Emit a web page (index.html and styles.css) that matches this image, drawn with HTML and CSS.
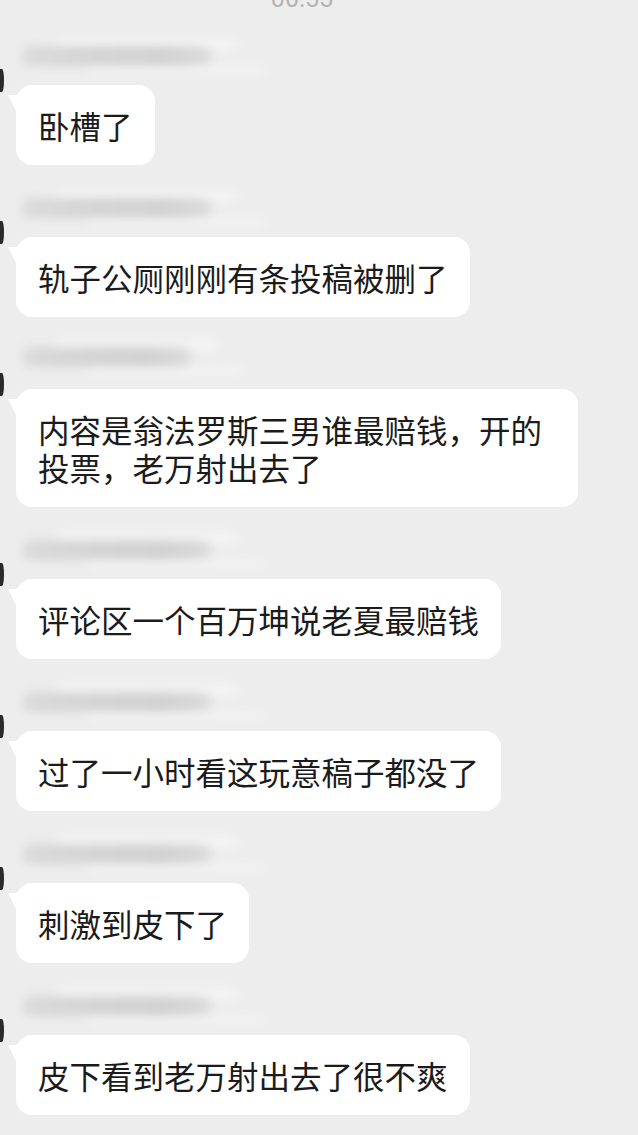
FILE: index.html
```html
<!DOCTYPE html>
<html lang="zh-CN">
<head>
<meta charset="utf-8">
<title>聊天记录</title>
<link rel="stylesheet" href="styles.css">
</head>
<body>
<div class="chat">
  <div class="time">00:55</div>

  <div class="msg">
    <div class="head"><div class="name-blur"></div></div>
    <span class="avatar"></span>
    <div class="bubble">卧槽了</div>
  </div>

  <div class="msg">
    <div class="head"><div class="name-blur"></div></div>
    <span class="avatar"></span>
    <div class="bubble">轨子公厕刚刚有条投稿被删了</div>
  </div>

  <div class="msg">
    <div class="head"><div class="name-blur name-short"></div></div>
    <span class="avatar"></span>
    <div class="bubble">内容是翁法罗斯三男谁最赔钱，开的投票，老万射出去了</div>
  </div>

  <div class="msg">
    <div class="head"><div class="name-blur"></div></div>
    <span class="avatar"></span>
    <div class="bubble">评论区一个百万坤说老夏最赔钱</div>
  </div>

  <div class="msg">
    <div class="head"><div class="name-blur"></div></div>
    <span class="avatar"></span>
    <div class="bubble">过了一小时看这玩意稿子都没了</div>
  </div>

  <div class="msg">
    <div class="head"><div class="name-blur"></div></div>
    <span class="avatar"></span>
    <div class="bubble">刺激到皮下了</div>
  </div>

  <div class="msg">
    <div class="head"><div class="name-blur"></div></div>
    <span class="avatar"></span>
    <div class="bubble">皮下看到老万射出去了很不爽</div>
  </div>
</div>
</body>
</html>
```

FILE: styles.css
```css
html, body {
  margin: 0;
  padding: 0;
  background: #ededed;
  overflow: hidden;
}

.chat {
  display: flex;
  flex-direction: column;
  align-items: flex-start;
  font-family: "Noto Sans CJK SC", "Noto Sans", sans-serif;
}

.time {
  align-self: stretch;
  margin-top: -15px;
  height: 28px;
  padding-right: 34px;
  text-align: center;
  font-family: Roboto, "Liberation Sans", sans-serif;
  font-size: 25px;
  line-height: 28px;
  color: #b3b3b3;
}

.msg {
  position: relative;
  display: flex;
  flex-direction: column;
  align-items: flex-start;
}

.head {
  height: 72px;
  display: flex;
  align-items: flex-start;
  box-sizing: border-box;
}

.name-blur {
  margin-top: 33px;
  margin-left: 22px;
  width: 190px;
  height: 20px;
  border-radius: 10px;
  background: linear-gradient(90deg, #dadada 0%, #d4d4d4 40%, #d2d2d2 75%, #dcdcdc 100%);
  filter: blur(5px);
  box-shadow: 30px -12px 0 -4px #f4f4f4, 60px 14px 0 -6px #f3f3f3;
}

.name-short {
  width: 170px;
  margin-top: 30px;
}

.avatar {
  position: absolute;
  left: 0;
  top: 56px;
  width: 4px;
  height: 23px;
  border-radius: 0 50% 50% 0;
  background: #2a2a2a;
  filter: blur(0.5px);
}

.bubble {
  position: relative;
  margin-left: 16px;
  max-width: 518px;
  padding: 21px 22px;
  background: #ffffff;
  border-radius: 16px;
  color: #1b1b1b;
  font-size: 31.5px;
  line-height: 38px;
  word-break: break-all;
}

.bubble::before {
  content: "";
  position: absolute;
  left: -8px;
  top: 10px;
  width: 10px;
  height: 20px;
  background: #ffffff;
  clip-path: polygon(0 0, 100% 0, 100% 100%);
}
```
